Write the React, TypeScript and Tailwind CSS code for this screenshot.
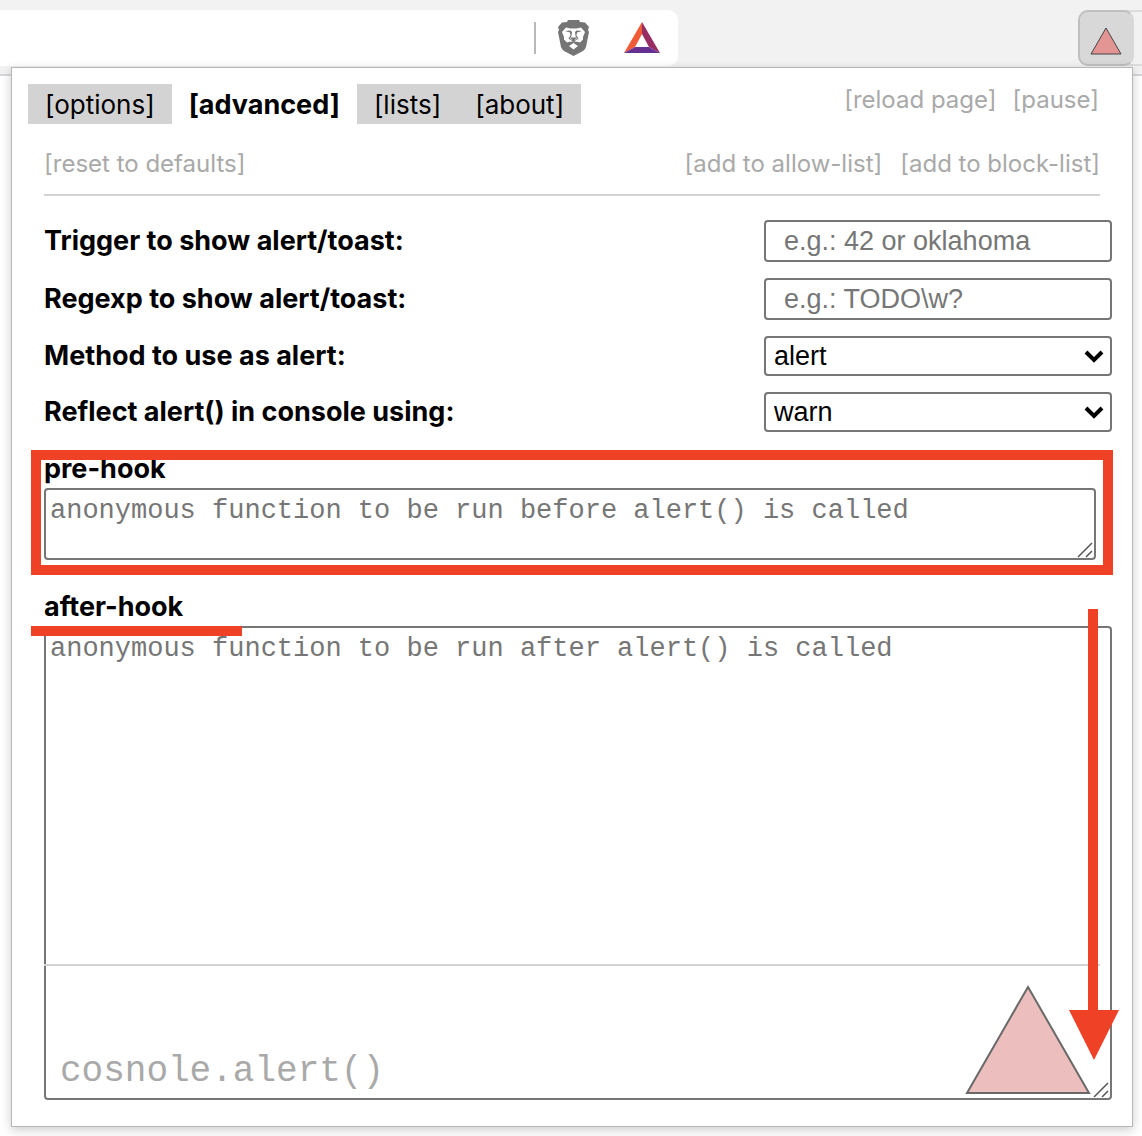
import type { ReactNode } from "react";

const field =
  "block w-[348px] rounded-[4px] border-2 border-[#767676] bg-white font-['Liberation_Sans',sans-serif] text-[27px] leading-[30px]";
const area =
  "block resize-none rounded-[4px] border-2 border-[#767676] bg-white px-1 py-[5px] font-['Liberation_Mono',monospace] text-[27px] leading-8 placeholder:text-[#767676] placeholder:opacity-100";

function LionLogo() {
  return (
    <svg className="h-9 w-8" viewBox="0 0 32 36" aria-hidden="true">
      <path
        d="M9 2 10 0H21L22 2 27 2.500 31 7 30 10 31 12 28 27Q27.500 29 25 31L15.500 36 6 31Q3.500 29 3 27L0 12 1 10 0 7 4 2.500Z"
        fill="#757575"
      />
      <path
        d="M4 12 8 7.500 12.500 8.500H18.500L23 7.500 27 12 25 17 25 19.500 22 22.500 19 21.500 15.500 23.500 12 21.500 9 22.500 6 19.500 6 17Z"
        fill="#fff"
      />
      <path d="M15.500 23 20 26 15.500 29.500 11 26Z" fill="#fff" />
      <path
        d="M10 25 15.500 21.500 21 25M15.500 19V22.500"
        fill="none"
        stroke="#757575"
        strokeWidth="1.500"
      />
      <path
        d="M7 11 12.500 10.500 14 12 13.500 16 12 18.500 15.500 21 19 18.500 17.500 16 17 12 18.500 10.500 24 11 19 12.500 18.500 15.500 20.500 18.500 15.500 22 10.500 18.500 12.500 15.500 12 12.500Z"
        fill="#757575"
      />
      <path d="M12 17.500H19L15.500 21Z" fill="#757575" />
    </svg>
  );
}

function BatLogo() {
  return (
    <svg className="h-8 w-9" viewBox="0 0 36 32" aria-hidden="true">
      <path d="M18 0 0 31 11 25 18 12Z" fill="#f15a36" />
      <path d="M18 0 36 31 25 25 18 12Z" fill="#962d63" />
      <path d="M0 31 11 25H25L36 31Z" fill="#663090" />
    </svg>
  );
}

function Grip() {
  return (
    <svg
      className="pointer-events-none absolute right-[3px] bottom-[2px] size-4"
      viewBox="0 0 16 16"
      stroke="#555"
      strokeWidth="1.5"
      aria-hidden="true"
    >
      <path d="M1 15 15 1M9 15 15 9" />
    </svg>
  );
}

function Tab({ children, active }: { children: ReactNode; active?: boolean }) {
  return (
    <button
      type="button"
      className={
        active
          ? "h-10 bg-white px-[17px] pt-[2px] text-[27px] font-bold"
          : "h-10 bg-[#d3d3d3] px-[17px] pt-[2px]"
      }
    >
      {children}
    </button>
  );
}

function Row({ id, label, children }: { id: string; label: string; children: ReactNode }) {
  return (
    <div className="flex items-center justify-between">
      <label htmlFor={id} className="text-[27px] font-bold">
        {label}
      </label>
      {children}
    </div>
  );
}

function Select({ id, value, options }: { id: string; value: string; options: string[] }) {
  return (
    <div className="relative">
      <select id={id} defaultValue={value} className={`${field} h-10 appearance-none px-2`}>
        {options.map((o) => (
          <option key={o}>{o}</option>
        ))}
      </select>
      <svg
        className="pointer-events-none absolute top-[13px] right-2 h-[14px] w-5"
        viewBox="0 0 20 14"
        fill="none"
        stroke="#000"
        strokeWidth="4"
        aria-hidden="true"
      >
        <path d="M2 3 10 11 18 3" />
      </svg>
    </div>
  );
}

export default function App() {
  return (
    <div className="min-h-screen overflow-hidden bg-white pb-[9px] font-['Inter',sans-serif] text-[26px] leading-8 text-black">
      <header className="flex h-[76px] items-start justify-between border-b-2 border-[#d5d7db] bg-[#f2f2f2] pt-[10px]">
        <div className="flex h-14 w-[678px] items-center justify-end rounded-r-[10px] bg-white pr-[18px]">
          <span className="h-8 w-[2px] bg-[#b8b8b8]" />
          <button type="button" aria-label="Brave Shields" className="ml-[22px]">
            <LionLogo />
          </button>
          <button type="button" aria-label="Rewards" className="ml-[34px]">
            <BatLogo />
          </button>
        </div>
        <div className="h-14 w-16 rounded-l-[10px] border-y-2 border-l-2 border-[#dcdcdc]">
          <button
            type="button"
            aria-label="cosnole.alert()"
            className="-mt-[2px] -ml-[2px] flex h-14 w-14 items-center justify-center rounded-[10px] border-2 border-[#c0c0c0] border-r-[#d8d8d8] bg-[#d8d8d8] pt-[6px]"
          >
            <svg className="h-7 w-8" viewBox="0 0 32 28" aria-hidden="true">
              <path d="M16 1 31 27H1Z" fill="#e29593" stroke="#444" />
            </svg>
          </button>
        </div>
      </header>

      <main className="relative -mt-[9px] mr-[9px] ml-[11px] border border-[#b5b8b8] bg-white pt-4 pb-[26px] shadow-[0_3px_10px_rgba(0,0,0,0.2)]">
        <div className="flex items-start justify-between pr-[33px] pl-4">
          <nav className="flex">
            <Tab>[options]</Tab>
            <Tab active>[advanced]</Tab>
            <Tab>[lists]</Tab>
            <Tab>[about]</Tab>
          </nav>
          <div className="flex gap-4 text-2xl leading-8 text-[#a9a9a9]">
            <button type="button">[reload page]</button>
            <button type="button">[pause]</button>
          </div>
        </div>

        <div className="mt-6 mr-8 ml-8 flex justify-between border-b-2 border-[#d3d3d3] pb-[14px] text-2xl leading-8 text-[#a9a9a9]">
          <button type="button">[reset to defaults]</button>
          <div className="flex gap-[18px]">
            <button type="button">[add to allow-list]</button>
            <button type="button">[add to block-list]</button>
          </div>
        </div>

        <form className="mt-6 mr-5 ml-8">
          <div className="flex flex-col gap-4">
            <Row id="trigger" label="Trigger to show alert/toast:">
              <input
                id="trigger"
                placeholder="e.g.: 42 or oklahoma"
                className={`${field} h-[42px] px-[18px] placeholder:text-[#767676] placeholder:opacity-100`}
              />
            </Row>
            <Row id="regexp" label="Regexp to show alert/toast:">
              <input
                id="regexp"
                placeholder="e.g.: TODO\w?"
                className={`${field} h-[42px] px-[18px] placeholder:text-[#767676] placeholder:opacity-100`}
              />
            </Row>
            <Row id="method" label="Method to use as alert:">
              <Select id="method" value="alert" options={["alert", "toast"]} />
            </Row>
            <Row id="reflect" label="Reflect alert() in console using:">
              <Select id="reflect" value="warn" options={["log", "info", "warn", "error"]} />
            </Row>
          </div>

          <div className="relative mt-5 mr-4">
            <label htmlFor="pre" className="block h-9 text-[27px] leading-[34px] font-bold">
              pre-hook
            </label>
            <div className="relative">
              <textarea
                id="pre"
                placeholder="anonymous function to be run before alert() is called"
                className={`${area} h-[72px] w-full`}
              />
              <Grip />
            </div>
            <div className="pointer-events-none absolute -top-[2px] -right-[17px] -bottom-[15px] -left-[13px] border-10 border-[#ee4126]" />
          </div>

          <div className="relative mt-[30px]">
            <label htmlFor="after" className="block h-9 text-[27px] leading-[34px] font-bold">
              after-hook
            </label>
            <textarea
              id="after"
              placeholder="anonymous function to be run after alert() is called"
              className={`${area} h-[474px] w-full`}
            />
            <Grip />
            <div className="pointer-events-none absolute top-9 -left-[13px] h-[10px] w-[211px] bg-[#ee4126]" />
            <footer className="pointer-events-none absolute right-3 bottom-0 left-0 flex h-[136px] items-end justify-between border-t-2 border-[#d3d3d3] pr-[9px] pb-[5px] pl-4">
              <span className="pb-[3px] font-['Liberation_Mono',monospace] text-4xl text-[#a9a9a9]">
                cosnole.alert()
              </span>
              <svg className="h-[110px] w-[126px]" viewBox="0 0 126 110" aria-hidden="true">
                <path d="M63 2 124 108H2Z" fill="#ecbfbe" stroke="#696969" strokeWidth="2" />
              </svg>
            </footer>
            <svg
              className="pointer-events-none absolute top-[19px] -right-[7px] h-[451px] w-[50px]"
              viewBox="0 0 50 451"
              fill="#ee4126"
              aria-hidden="true"
            >
              <path d="M19 0H29V401H50L25 451 0 401H19Z" />
            </svg>
          </div>
        </form>
      </main>
    </div>
  );
}
